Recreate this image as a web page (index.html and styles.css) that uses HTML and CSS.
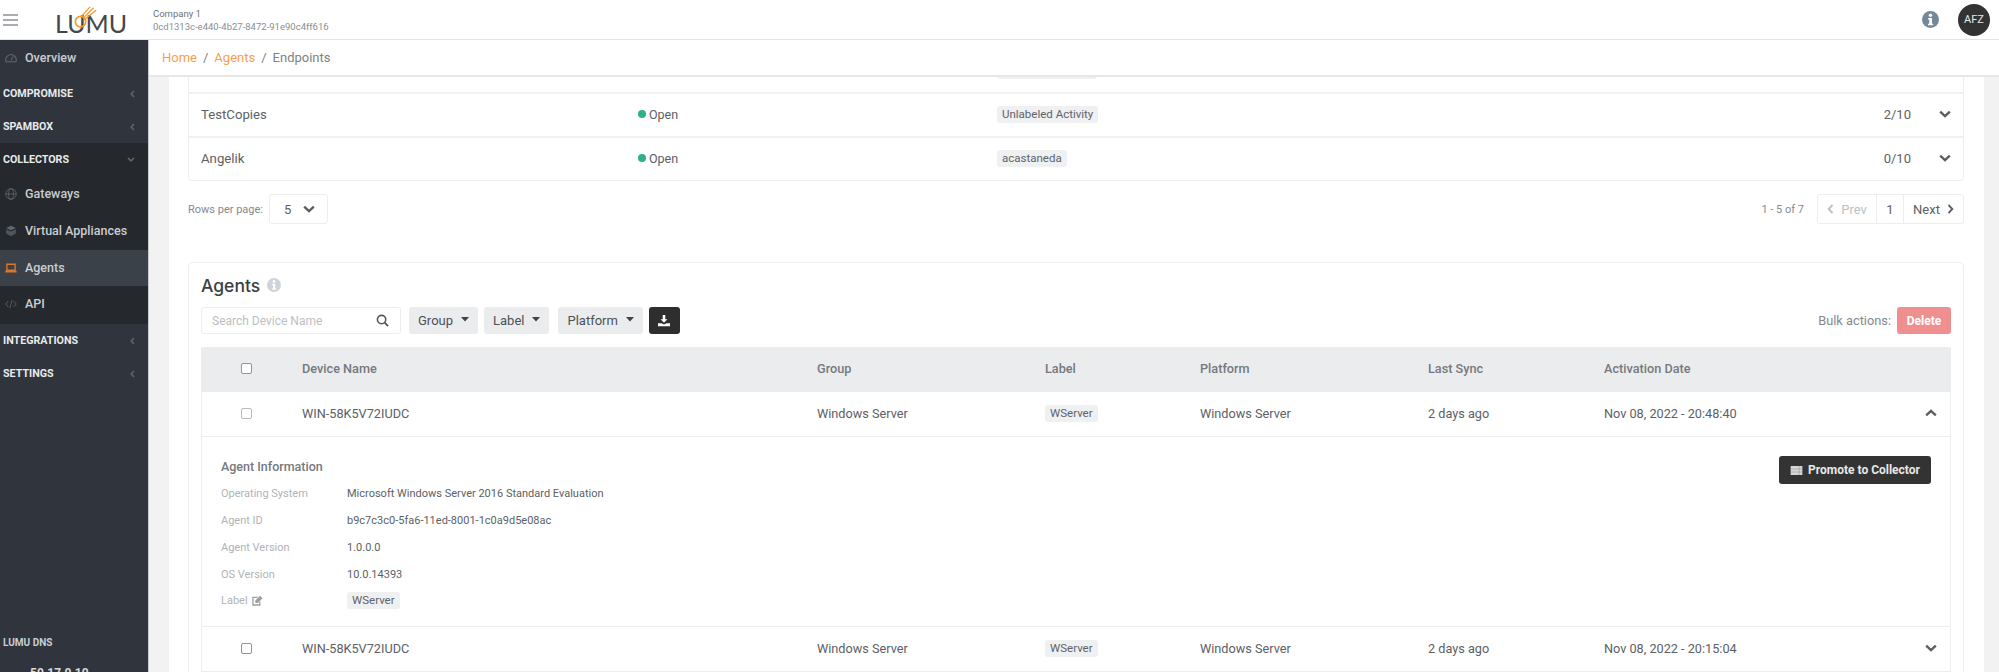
FILE: index.html
```html
<!DOCTYPE html>
<html lang="en">
<head>
<meta charset="utf-8">
<title>Lumu - Endpoints</title>
<link rel="stylesheet" href="styles.css">
</head>
<body>
<svg class="defs" aria-hidden="true">
  <defs>
    <symbol id="chev-down" viewBox="0 0 12 8"><path d="M1.2 1.6 6 6.2l4.8-4.6" fill="none" stroke="currentColor" stroke-width="2.4"/></symbol>
    <symbol id="chev-up" viewBox="0 0 12 8"><path d="M1.2 6.4 6 1.8l4.8 4.6" fill="none" stroke="currentColor" stroke-width="2.4"/></symbol>
    <symbol id="chev-left" viewBox="0 0 8 12"><path d="M6.4 1.2 1.8 6l4.600 4.800" fill="none" stroke="currentColor" stroke-width="2.200"/></symbol>
    <symbol id="chev-right" viewBox="0 0 8 12"><path d="M1.6 1.2 6.200 6l-4.600 4.800" fill="none" stroke="currentColor" stroke-width="2.200"/></symbol>
    <symbol id="info" viewBox="0 0 16 16"><circle cx="8" cy="8" r="8" fill="currentColor"/><circle cx="8" cy="4" r="1.6" fill="#fff"/><path d="M5.8 6.6h3.6v5.4h1.1v1.4H5.6V12h1.2V8H5.8z" fill="#fff"/></symbol>
    <symbol id="caret" viewBox="0 0 8 5"><path d="M0 0h8L4 4.600z" fill="currentColor"/></symbol>
  </defs>
</svg>
<div class="app">
  <header class="topbar">
    <div class="burger"><span></span><span></span><span></span></div>
    <div class="logo">
      <span class="logo-word">LUMU</span>
      <svg class="logo-mark" viewBox="0 0 34 30" aria-hidden="true">
        <circle cx="13" cy="18" r="6" fill="none" stroke="#f59a2f" stroke-width="2"/>
        <path d="M16 14 28 2M17 16 31 5M14 12 24 1" stroke="#f59a2f" stroke-width="1.500" fill="none"/>
      </svg>
    </div>
    <div class="company">
      <div class="company-name">Company 1</div>
      <div class="company-id">0cd1313c-e440-4b27-8472-91e90c4ff616</div>
    </div>
    <div class="top-right">
      <svg class="top-info"><use href="#info"/></svg>
      <div class="avatar">AFZ</div>
    </div>
  </header>
  <div class="body">
    <nav class="sidebar">
      <a class="nav-item">
        <svg class="nav-ico" viewBox="0 0 16 16"><path d="M1.5 13a7 7 0 1 1 13 0z" fill="none" stroke="currentColor" stroke-width="1.4"/><path d="M8 11l3-5" stroke="currentColor" stroke-width="1.4"/></svg>
        Overview
      </a>
      <div class="nav-head"><span>COMPROMISE</span><svg class="nav-chev"><use href="#chev-left"/></svg></div>
      <div class="nav-head"><span>SPAMBOX</span><svg class="nav-chev"><use href="#chev-left"/></svg></div>
      <div class="nav-group">
        <div class="nav-head"><span>COLLECTORS</span><svg class="nav-chev down"><use href="#chev-down"/></svg></div>
        <a class="nav-item">
          <svg class="nav-ico" viewBox="0 0 16 16"><g fill="none" stroke="currentColor" stroke-width="1.1"><circle cx="8" cy="8" r="7"/><ellipse cx="8" cy="8" rx="3.2" ry="7"/><path d="M1 8h14"/></g></svg>
          Gateways
        </a>
        <a class="nav-item">
          <svg class="nav-ico" viewBox="0 0 16 16"><path d="M8 1l6.5 3L8 7 1.5 4z" fill="currentColor"/><path d="M1.5 5.8 8 8.8l6.5-3v5.6L8 15l-6.5-3.600z" fill="currentColor" opacity=".7"/></svg>
          Virtual Appliances
        </a>
        <a class="nav-item active">
          <svg class="nav-ico" viewBox="0 0 16 16"><path d="M2.500 3h11v8h-11z" fill="none" stroke="#d9772b" stroke-width="1.800"/><path d="M.5 11.500h15v2.500H.5z" fill="#d9772b"/></svg>
          Agents
        </a>
        <a class="nav-item nav-last">
          <svg class="nav-ico" viewBox="0 0 16 16"><path d="M4.500 4 1 8l3.500 4M11.500 4 15 8l-3.500 4M9.500 2.500l-3 11" fill="none" stroke="currentColor" stroke-width="1.100"/></svg>
          API
        </a>
      </div>
      <div class="nav-head"><span>INTEGRATIONS</span><svg class="nav-chev"><use href="#chev-left"/></svg></div>
      <div class="nav-head"><span>SETTINGS</span><svg class="nav-chev"><use href="#chev-left"/></svg></div>
      <div class="nav-foot">
        <div class="foot-title">LUMU DNS</div>
        <div class="foot-ip">50.17.0.10</div>
      </div>
    </nav>
    <main class="main">
      <div class="crumbs">
        <a class="crumb-link">Home</a><span class="sep">/</span><a class="crumb-link">Agents</a><span class="sep">/</span><span class="crumb-now">Endpoints</span>
      </div>
      <div class="scroll">
        <div class="panel">
          <section class="card groups">
            <div class="g-row g-stub"><span></span><span></span><span class="badge badge-stub"></span></div>
            <div class="g-row">
              <span>TestCopies</span>
              <span class="status"><i class="dot"></i>Open</span>
              <span class="badge-cell"><span class="badge">Unlabeled Activity</span></span>
              <span class="count">2/10</span>
              <svg class="row-chev"><use href="#chev-down"/></svg>
            </div>
            <div class="g-row">
              <span>Angelik</span>
              <span class="status"><i class="dot"></i>Open</span>
              <span class="badge-cell"><span class="badge">acastaneda</span></span>
              <span class="count">0/10</span>
              <svg class="row-chev"><use href="#chev-down"/></svg>
            </div>
          </section>
          <div class="pager-row">
            <div class="rows-per">
              <span class="rows-label">Rows per page:</span>
              <div class="rows-select"><span>5</span><svg class="row-chev"><use href="#chev-down"/></svg></div>
            </div>
            <div class="pager-wrap">
              <span class="rows-label">1 - 5 of 7</span>
              <div class="pager">
                <span class="pg pg-prev"><svg class="pg-chev"><use href="#chev-left"/></svg>Prev</span>
                <span class="pg pg-num">1</span>
                <span class="pg pg-next">Next<svg class="pg-chev"><use href="#chev-right"/></svg></span>
              </div>
            </div>
          </div>
          <section class="card agents">
            <h2 class="agents-title">Agents <svg class="title-info"><use href="#info"/></svg></h2>
            <div class="toolbar">
              <div class="search">
                <span>Search Device Name</span>
                <svg class="search-ico" viewBox="0 0 14 14"><circle cx="6" cy="6" r="4.500" fill="none" stroke="currentColor" stroke-width="1.700"/><path d="M9.300 9.300 13 13" stroke="currentColor" stroke-width="2"/></svg>
              </div>
              <button class="filter">Group<svg class="caret"><use href="#caret"/></svg></button>
              <button class="filter f-label">Label<svg class="caret"><use href="#caret"/></svg></button>
              <button class="filter">Platform<svg class="caret"><use href="#caret"/></svg></button>
              <button class="dl" aria-label="Download">
                <svg viewBox="0 0 14 14"><path d="M5.500 0h3v5h2.500L7 9 3 5h2.500z" fill="#fff"/><path d="M0 9.500h4L7 11l3-1.500h4V13H0z" fill="#fff"/></svg>
              </button>
              <div class="bulk"><span>Bulk actions:</span><button class="delete">Delete</button></div>
            </div>
            <div class="table">
              <div class="t-row t-head">
                <span class="cb-cell"><i class="cb"></i></span>
                <span>Device Name</span><span>Group</span><span>Label</span><span>Platform</span><span>Last Sync</span><span>Activation Date</span><span></span>
              </div>
              <div class="t-row">
                <span class="cb-cell"><i class="cb cb-soft"></i></span>
                <span>WIN-58K5V72IUDC</span><span>Windows Server</span><span><span class="badge">WServer</span></span><span>Windows Server</span><span>2 days ago</span><span>Nov 08, 2022 - 20:48:40</span>
                <svg class="row-chev"><use href="#chev-up"/></svg>
              </div>
              <div class="detail">
                <div class="detail-info">
                  <h3 class="detail-title">Agent Information</h3>
                  <dl class="props">
                    <dt>Operating System</dt><dd>Microsoft Windows Server 2016 Standard Evaluation</dd>
                    <dt>Agent ID</dt><dd>b9c7c3c0-5fa6-11ed-8001-1c0a9d5e08ac</dd>
                    <dt>Agent Version</dt><dd>1.0.0.0</dd>
                    <dt>OS Version</dt><dd>10.0.14393</dd>
                    <dt>Label <svg class="edit" viewBox="0 0 14 12"><path d="M1.500 1.500h7L7 3H3v7.500h6.500V8L11 6.500V12H1.500z" fill="currentColor"/><path d="M5 6 10.500.5 13.500 3.500 8 9H5z" fill="currentColor"/></svg></dt><dd><span class="badge">WServer</span></dd>
                  </dl>
                </div>
                <button class="promote">
                  <svg viewBox="0 0 13 10"><path d="M0 0h13v10H0z" fill="#d6d6d6"/><path d="M0 3.300h13M0 6.700h13M9.500 0v10" stroke="#8a8a8a" stroke-width=".5"/></svg>
                  Promote to Collector
                </button>
              </div>
              <div class="t-row">
                <span class="cb-cell"><i class="cb"></i></span>
                <span>WIN-58K5V72IUDC</span><span>Windows Server</span><span><span class="badge">WServer</span></span><span>Windows Server</span><span>2 days ago</span><span>Nov 08, 2022 - 20:15:04</span>
                <svg class="row-chev"><use href="#chev-down"/></svg>
              </div>
            </div>
          </section>
        </div>
      </div>
    </main>
  </div>
</div>
</body>
</html>
```
FILE: styles.css
```css
* { box-sizing: border-box; }
html, body { margin: 0; height: 100%; overflow: hidden; }
body { font-family: Roboto, "Liberation Sans", sans-serif; font-size: 13px; color: #5c6066; background: #fff; }
.defs { position: absolute; width: 0; height: 0; }
.app { height: 672px; display: flex; flex-direction: column; overflow: hidden; }

.topbar { height: 40px; flex: none; display: flex; align-items: center; background: #fff; border-bottom: 1px solid #e4e5e6; }
.burger { width: 15px; margin-left: 3px; display: flex; flex-direction: column; gap: 3px; }
.burger span { height: 2px; background: #a9acb0; }
.logo { position: relative; margin-left: 37px; width: 75px; height: 34px; display: flex; align-items: flex-end; }
.logo-word { font-family: Lato, sans-serif; font-size: 25px; line-height: 28px; color: #44484c; }
.logo-mark { position: absolute; left: 14px; top: 3px; width: 30px; height: 26px; }
.company { margin-left: 23px; font-size: 9.500px; line-height: 13px; color: #6d7278; }
.company-id { color: #8a8e93; }
.top-right { margin-left: auto; display: flex; align-items: center; gap: 19px; padding-right: 9px; }
.top-info { width: 17px; height: 17px; color: #76879a; }
.avatar { width: 32px; height: 32px; border-radius: 50%; background: #333; color: #e8e8e8; font-size: 11px; display: flex; align-items: center; justify-content: center; }

.body { flex: 1; min-height: 0; display: flex; }
.sidebar { width: 149px; flex: none; background: #30353d; color: #c5c9ce; display: flex; flex-direction: column; overflow: hidden; border-right: 1px solid #c9cacb; }
.nav-item { height: 37px; padding: 0 0 2px 5px; display: flex; align-items: center; gap: 8px; font-size: 12.500px; font-weight: 500; color: #c9cdd2; }
.nav-ico { width: 12px; height: 12px; color: #5f6870; flex: none; }
.nav-head { height: 33px; display: flex; align-items: center; justify-content: space-between; padding: 0 13px 0 3px; font-size: 10.700px; font-weight: 700; color: #e8eaec; }
.nav-chev { width: 5px; height: 8px; color: #5f6870; }
.nav-chev.down { width: 8px; height: 5px; }
.nav-group { background: #25282d; }
.nav-item.active { background: #3a4148; padding-bottom: 1px; height: 36px; }
.nav-last { height: 38px; padding-bottom: 3px; }
.nav-foot { margin-top: auto; height: 41px; flex: none; padding: 0 3px; }
.foot-title { font-size: 10px; font-weight: 700; color: #c9cdd2; line-height: 24px; }
.foot-ip { margin-top: 10px; padding-left: 27px; font-size: 12px; line-height: 16px; font-weight: 700; color: #d6d9dc; }

.main { flex: 1; min-width: 0; display: flex; flex-direction: column; }
.crumbs { height: 37px; flex: none; display: flex; align-items: center; padding-left: 13px; font-size: 13px; border-bottom: 2px solid #e6e7e8; background: #fff; }
.crumb-link { color: #f9a04b; }
.crumb-now { color: #7d8186; }
.sep { color: #7d8186; margin: 0 6px; }
.scroll { flex: 1; min-height: 0; overflow: hidden; background: #f2f2f2; padding: 0 15px 0 20px; }
.panel { background: #fff; padding: 0 20px 0 19px; height: 100%; overflow: hidden; }

.card { background: #fff; border: 1px solid #eeeeef; border-radius: 4px; }
.groups { border-top: 0; border-radius: 0 0 4px 4px; }
.g-row { height: 44px; display: grid; grid-template-columns: 437px 359px 1fr 36px 40px; align-items: center; padding: 0 12px 2px 12px; border-top: 2px solid #f1f1f2; font-size: 13.200px; }
.g-stub { height: 15px; padding: 0 12px; border-top: 0; overflow: hidden; align-items: start; }
.badge-stub { margin-top: -15px; width: 100px; }
.status { display: flex; align-items: center; gap: 3px; font-size: 12.500px; }
.dot { width: 8px; height: 8px; border-radius: 50%; background: #2eb088; }
.badge { display: inline-flex; align-items: center; height: 17px; padding: 0 5px; border-radius: 3px; background: #eff0f2; font-size: 11.500px; color: #5e6369; }
.count { text-align: right; font-size: 13px; }
.row-chev { width: 12px; height: 8px; color: #5b5f64; justify-self: end; }

.pager-row { height: 81px; padding-top: 13px; display: flex; justify-content: space-between; align-items: flex-start; }
.rows-per { display: flex; align-items: center; gap: 6px; }
.rows-label { font-size: 11px; color: #85898e; }
.rows-select { width: 59px; height: 30px; display: flex; align-items: center; justify-content: space-between; padding: 0 12px 0 14px; border: 1px solid #eeeeef; border-radius: 3px; font-size: 13px; }
.pager-wrap { display: flex; align-items: center; gap: 13px; }
.pager { display: flex; height: 30px; border: 1px solid #eeeeef; border-radius: 3px; font-size: 13px; }
.pg { display: flex; align-items: center; gap: 7px; justify-content: center; }
.pg-prev { width: 59px; color: #bcbfc2; border-right: 1px solid #eeeeef; }
.pg-num { width: 27px; border-right: 1px solid #eeeeef; }
.pg-next { width: 59px; }
.pg-chev { width: 7px; height: 10px; }

.agents { padding: 0 12px; height: 420px; }
.agents-title { margin: 0; height: 44px; display: flex; align-items: center; gap: 7px; font-family: Inter, sans-serif; font-size: 17.500px; font-weight: 500; color: #3b3f44; }
.title-info { width: 14px; height: 14px; color: #cfd4d9; }
.toolbar { height: 27px; display: flex; gap: 6px; align-items: stretch; font-size: 13px; }
.search { width: 200px; margin-right: 2px; display: flex; align-items: center; justify-content: space-between; padding: 0 11px 0 10px; border: 1px solid #eeeeef; border-radius: 3px; color: #bcbfc2; font-size: 12px; }
.search-ico { width: 13px; height: 13px; color: #54585d; }
.filter { border: 0; background: #ebecee; border-radius: 3px; font: inherit; color: #4d5156; display: flex; align-items: center; gap: 8px; padding: 0 9px; }
.f-label { margin-right: 3px; }
.caret { width: 8px; height: 5px; color: #3f4246; margin-top: -3px; }
.dl { width: 31px; border: 0; border-radius: 3px; background: #2e2e2e; padding: 0; display: flex; align-items: center; justify-content: center; }
.dl svg { width: 12px; height: 12px; }
.bulk { margin-left: auto; display: flex; align-items: center; gap: 6px; font-size: 12.800px; color: #85898e; }
.delete { width: 54px; height: 27px; border: 0; border-radius: 3px; background: #ef8f8f; color: #fff; font: inherit; font-size: 12px; font-weight: 700; }

.table { margin-top: 13px; border-left: 1px solid #eeeeef; border-right: 1px solid #eeeeef; }
.t-row { height: 45px; display: grid; grid-template-columns: 100px 515px 228px 155px 228px 176px 1fr 20px; align-items: center; border-bottom: 1px solid #eeeeef; font-size: 12.700px; padding: 0 13px 2px 0; justify-items: start; }
.t-head { background: #ebecee; border-radius: 4px 4px 0 0; border-bottom: 0; font-weight: 500; color: #75797e; margin: 0 -1px; padding-left: 1px; }
.cb-cell { justify-self: center; margin-left: -12px; display: flex; }
.cb { width: 11px; height: 11px; border: 1px solid #8f9397; border-radius: 2px; background: #fff; }
.cb-soft { border-color: #b9bcbf; }
.t-row .row-chev { justify-self: end; }

.detail { height: 190px; display: flex; justify-content: space-between; align-items: flex-start; padding: 19px 19px 0 19px; border-bottom: 1px solid #eeeeef; }
.detail-title { margin: 0; font-size: 12.500px; font-weight: 500; color: #75797e; line-height: 22px; }
.props { margin: 2px 0 0; display: grid; grid-template-columns: 126px 1fr; grid-template-rows: 27px 27px 27px 27px 24px; align-items: center; font-size: 11px; }
.props dt { color: #b0b3b6; display: flex; align-items: center; gap: 3px; }
.props dd { margin: 0; color: #5b5f64; }
.edit { width: 12px; height: 11px; color: #9b9ea2; }
.promote { width: 152px; height: 28px; border: 0; border-radius: 3px; background: #333; color: #e8e8e8; font: inherit; font-size: 12px; font-weight: 700; display: flex; align-items: center; justify-content: center; gap: 5px; }
.promote svg { width: 13px; height: 9px; }
```
